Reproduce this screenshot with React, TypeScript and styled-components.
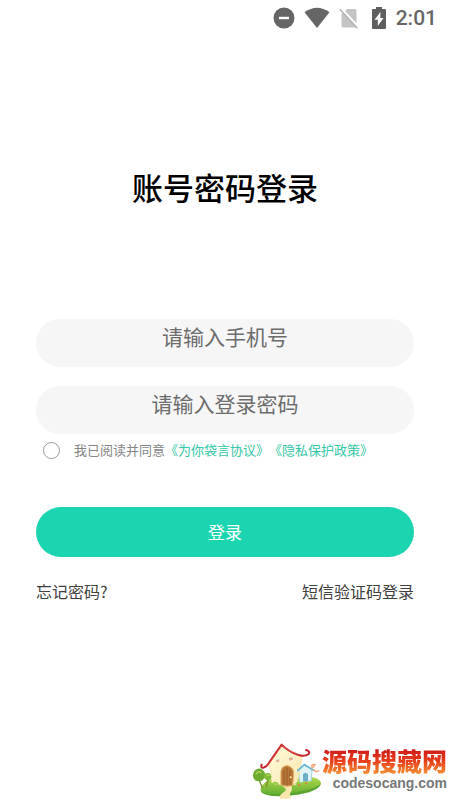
import React from 'react';
import styled, { createGlobalStyle } from 'styled-components';

const GlobalStyle = createGlobalStyle`
  *, *::before, *::after { box-sizing: border-box; }
  body {
    margin: 0;
    background: #fff;
    font-family: "Noto Sans CJK SC", sans-serif;
    text-spacing-trim: space-all;
  }
`;

const Page = styled.div`
  display: flex;
  flex-direction: column;
  min-height: 100vh;
`;

const StatusBar = styled.header`
  display: flex;
  align-items: center;
  justify-content: flex-end;
  gap: 9px;
  height: 36px;
  padding-right: 13px;
  color: #666;
`;

const Clock = styled.time`
  font: 500 21px/24px Roboto, sans-serif;
`;

const Main = styled.main`
  display: flex;
  flex-direction: column;
  padding: 127px 36px 0;
`;

const Title = styled.h1`
  margin: 0 0 108px;
  font-size: 31px;
  line-height: 48px;
  font-weight: 500;
  text-align: center;
  color: #000;
`;

const Form = styled.form`
  display: flex;
  flex-direction: column;
`;

const Field = styled.input`
  width: 100%;
  height: 48px;
  margin-bottom: 19px;
  padding: 0 24px 14px;
  border: 0;
  border-radius: 24px;
  background: #f6f6f6;
  color: #333;
  font-family: inherit;
  font-size: 21px;
  text-align: center;
  outline: none;
  &::placeholder { color: #6c6c6c; opacity: 1; }
`;

const Agreement = styled.div`
  display: flex;
  align-items: center;
  gap: 14px;
  height: 24px;
  margin: -15px 0 0 7px;
  font-size: 13px;
  line-height: 24px;
  color: #858585;
`;

const Check = styled.input`
  appearance: none;
  flex: none;
  width: 17px;
  height: 17px;
  margin: 0;
  border: 1px solid #999;
  border-radius: 50%;
  &:checked { background: #1bd5b0; border-color: #1bd5b0; }
`;

const PolicyLink = styled.a`
  color: #34c6a6;
  text-decoration: none;
`;

const Submit = styled.button`
  height: 50px;
  margin: 45px 0 22px;
  padding: 0 0 1px;
  border: 0;
  border-radius: 25px;
  background: #1ad5b0;
  color: #fff;
  font-family: inherit;
  font-size: 17px;
`;

const Links = styled.nav`
  display: flex;
  justify-content: space-between;
`;

const TextLink = styled.a`
  color: #404040;
  font-size: 16px;
  line-height: 24px;
  text-decoration: none;
`;

const Brand = styled.footer`
  display: flex;
  align-items: flex-end;
  align-self: flex-end;
  margin-top: auto;
  padding-right: 3px;
`;

const BrandText = styled.div`
  display: flex;
  flex-direction: column;
  align-items: flex-end;
  padding-bottom: 9px;
`;

const BrandName = styled.strong`
  font-size: 25px;
  line-height: 32px;
  font-weight: 900;
  color: transparent;
  background: linear-gradient(#d01c18 20%, #e8401c 55%, #f58a32 90%);
  background-clip: text;
  -webkit-background-clip: text;
`;

const BrandSite = styled.span`
  font: bold 14px/14px "Liberation Sans", sans-serif;
  color: #777;
`;

const DoNotDisturb = () => (
  <svg width="22" height="22" viewBox="0 0 22 22" aria-hidden="true">
    <circle cx="11" cy="11" r="10.5" fill="#666" />
    <path d="M6 11h10" stroke="#fff" strokeWidth="2.4" />
  </svg>
);

const Wifi = () => (
  <svg width="26" height="22" viewBox="0 0 26 22" aria-hidden="true">
    <path d="M0.5 5.2Q13-3.8 25.5 5.2L13 21Z" fill="#666" />
  </svg>
);

const NoSim = () => (
  <svg width="23" height="22" viewBox="0 0 23 22" aria-hidden="true">
    <path d="M8 2h8q1.500 0 1.500 1.500V20.500H4Q2.500 20.500 2.500 19V7.500Z" fill="#c4c4c4" />
    <path d="M2.200 1.200L19.500 20" stroke="#fff" strokeWidth="2" />
    <path d="M0.800 2.200L18.300 21.200" stroke="#b5b5b5" strokeWidth="1.600" />
  </svg>
);

const Battery = () => (
  <svg width="16" height="24" viewBox="0 0 16 24" aria-hidden="true">
    <path d="M5 1h6v2h3q1 0 1 1v18q0 1-1 1H2q-1 0-1-1V4q0-1 1-1h3Z" fill="#5f5f5f" />
    <path d="M9.500 6L3.500 13.700h3.300V20L12.500 12H9.300Z" fill="#fff" />
  </svg>
);

const House = () => (
  <svg width="72" height="59" viewBox="15 14 216 177" aria-hidden="true">
    <defs>
      <linearGradient id="lawn" x1="0" y1="0" x2="0" y2="1">
        <stop offset="0" stopColor="#b4dc4c" />
        <stop offset="1" stopColor="#5cab30" />
      </linearGradient>
      <linearGradient id="wall" x1="0" y1="0" x2="1" y2="1">
        <stop offset="0" stopColor="#fffbd9" />
        <stop offset="1" stopColor="#f9e6b0" />
      </linearGradient>
    </defs>
    <path d="M48 158Q58 134 85 130L185 124Q229 126 228 146Q218 168 145 177Q75 187 50 172Q44 166 48 158Z" fill="url(#lawn)" />
    <path d="M50 170Q80 182 145 172Q206 164 227 146Q221 170 145 180Q70 189 50 170Z" fill="#5ca532" />
    <path d="M109 151Q132 160 116 171Q101 180 105 190H139Q130 178 139 167Q145 156 134 150Z" fill="#f9e6ad" />
    <path d="M161 104L179 87L201 103L199 136L164 142Z" fill="#e2f4f8" stroke="#a5d3e0" strokeWidth="3" />
    <path d="M110 31L70 84Q82 115 80 142Q95 151 154 148L162 120L172 62Q145 62 110 31Z" fill="url(#wall)" stroke="#f0dca0" strokeWidth="2" />
    <path d="M158 106L178 88L205 104" fill="none" stroke="#62b6d2" strokeWidth="5" strokeLinecap="round" strokeLinejoin="round" />
    <path d="M174 138V117q7-10 15 0v20Z" fill="#6aaec8" />
    <path d="M108 148V108Q111 92 126 91Q142 93 146 110L143 150Q125 156 108 148Z" fill="#b87638" stroke="#dda75e" strokeWidth="3" />
    <path d="M117 106V148M126 97V150M135 104V148" stroke="#8c5226" strokeWidth="2" />
    <circle cx="137" cy="126" r="3" fill="#fff0a3" />
    <path d="M91 73l12-3 2 10-12 3ZM130 67l13-3 3 10-14 4Z" fill="#e3b284" stroke="#fff" strokeWidth="2" />
    <path d="M50 88Q46 98 56 97Q66 94 75 78L110 28Q131 49 157 58Q178 66 191 56Q196 47 183 44" fill="none" stroke="#c4252c" strokeWidth="6" strokeLinecap="round" strokeLinejoin="round" />
    <path d="M64 92Q72 86 79 75L111 30Q131 48 159 57" fill="none" stroke="#ed6650" strokeWidth="2" />
    <path d="M42 133l10 24M69 131l-5 24" stroke="#7a8a2e" strokeWidth="4" />
    <path d="M26 129q-6-14 4-24q12-10 22-2q11 7 8 20q-4 15-18 15q-12 1-16-9Z" fill="#6eab2f" />
    <path d="M58 129q-4-10 5-15q11-5 15 5q4 12-6 16q-10 1-14-6Z" fill="#7fba35" />
    <path d="M33 116q8-12 15-4M65 122q4-6 8-2" fill="none" stroke="#afd85d" strokeWidth="4" strokeLinecap="round" />
    <path d="M83 146q9-8 17 2M153 147q8-9 17-1q9-9 19-3" fill="none" stroke="#9acb45" strokeWidth="6" />
    <g fill="#ef6f50">
      <circle cx="163" cy="149" r="3" />
      <circle cx="184" cy="144" r="3" />
    </g>
    <path d="M200 98q8-2 10-10q-8-2-10 4M206 104q8 8 15 2" fill="none" stroke="#f0a070" strokeWidth="4" strokeLinecap="round" />
  </svg>
);

export default function App() {
  return (
    <Page>
      <GlobalStyle />
      <StatusBar>
        <DoNotDisturb />
        <Wifi />
        <NoSim />
        <Battery />
        <Clock>2:01</Clock>
      </StatusBar>
      <Main>
        <Title>账号密码登录</Title>
        <Form onSubmit={(event: React.FormEvent) => event.preventDefault()}>
          <Field type="tel" placeholder="请输入手机号" aria-label="手机号" />
          <Field type="password" placeholder="请输入登录密码" aria-label="登录密码" />
          <Agreement>
            <Check id="agree" type="checkbox" />
            <div>
              <label htmlFor="agree">我已阅读并同意</label>
              <PolicyLink href="#service">《为你袋言协议》</PolicyLink>
              <PolicyLink href="#privacy">《隐私保护政策》</PolicyLink>
            </div>
          </Agreement>
          <Submit type="submit">登录</Submit>
        </Form>
        <Links>
          <TextLink href="#forgot">忘记密码?</TextLink>
          <TextLink href="#sms">短信验证码登录</TextLink>
        </Links>
      </Main>
      <Brand>
        <House />
        <BrandText>
          <BrandName>源码搜藏网</BrandName>
          <BrandSite>codesocang.com</BrandSite>
        </BrandText>
      </Brand>
    </Page>
  );
}
